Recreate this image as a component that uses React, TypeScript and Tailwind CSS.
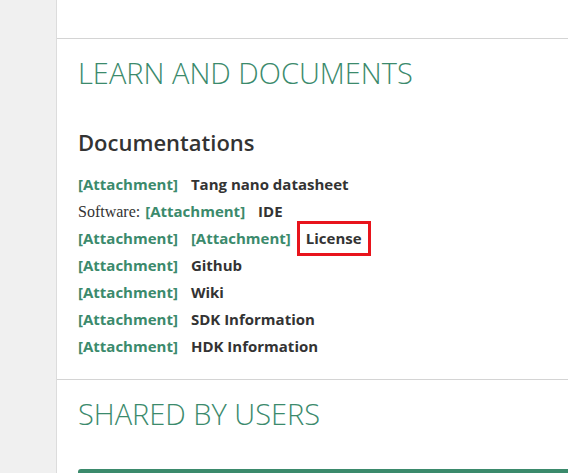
const docs: { pre?: string; links: number; label: string; boxed?: boolean }[] = [
  { links: 1, label: "Tang nano datasheet" },
  { pre: "Software:", links: 1, label: "IDE" },
  { links: 2, label: "License", boxed: true },
  { links: 1, label: "Github" },
  { links: 1, label: "Wiki" },
  { links: 1, label: "SDK Information" },
  { links: 1, label: "HDK Information" },
];

function Attachment() {
  return <a className="text-[#3b8a6c] font-bold mr-[13px]">[Attachment]</a>;
}

export default function App() {
  return (
    <div className="flex w-[568px] h-[473px] overflow-hidden bg-white" style={{ fontFamily: "'Open Sans', sans-serif" }}>
      <aside className="w-[56px] shrink-0 bg-[#f0f0f0]" />
      <main className="flex-1 border-l border-[#dcdcdc]">
        <div className="h-[39px] border-b border-[#d4d4d4]" />

        <section className="pl-[21px] pt-[14px] pb-[19px] border-b border-[#d4d4d4]">
          <h2 className="text-[#3b8a6c] text-[29px] font-light leading-[40px]">LEARN AND DOCUMENTS</h2>
          <h3 className="mt-[34px] text-[#333] text-[22px] font-semibold leading-[30px]">Documentations</h3>
          <ul className="mt-[14px] text-[15px] text-[#333] leading-[27px]">
            {docs.map((d, i) => (
              <li key={i} className="flex items-center h-[27px]">
                {d.pre && <span className="mr-[5px] text-[16px]" style={{ fontFamily: "'Liberation Serif', serif" }}>{d.pre}</span>}
                {Array.from({ length: d.links }).map((_, j) => <Attachment key={j} />)}
                {d.boxed ? (
                  <span className="-ml-[7px] border-[3px] border-[#e8141c] px-[6px] h-[35px] leading-[29px] font-bold">{d.label}</span>
                ) : (
                  <span className="font-bold">{d.label}</span>
                )}
              </li>
            ))}
          </ul>
        </section>

        <section className="pl-[21px] pt-[14px]">
          <h2 className="text-[#3b8a6c] text-[29px] font-light leading-[40px]">SHARED BY USERS</h2>
          <div className="mt-[35px] h-[8px] bg-[#3b8a6c] rounded-tl-[3px]" />
        </section>
      </main>
    </div>
  );
}
